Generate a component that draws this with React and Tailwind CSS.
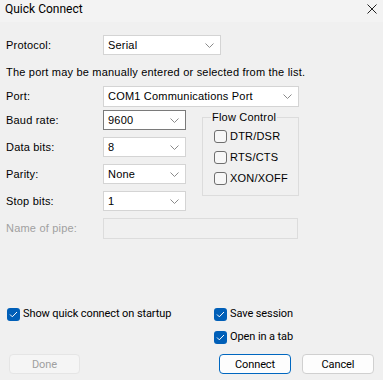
import React from "react";

const body = "font-['Liberation_Sans',Arial,sans-serif] text-[11px] tracking-[0.2px]";
const ui = "font-['Roboto','Noto_Sans',sans-serif] text-[11px] tracking-[-0.1px]";

function Chevron() {
  return (
    <svg width="9" height="5" viewBox="0 0 9 5" className="shrink-0">
      <path d="M0.5 0.5 L4.5 4.5 L8.5 0.5" fill="none" stroke="#8a8a8a" strokeWidth="1" />
    </svg>
  );
}

function Combo({ value, w, h = "h-[20px]", focused }) {
  return (
    <div className={`${w} ${h} flex items-center justify-between bg-white border ${focused ? "border-[#7a7a7a]" : "border-[#d4d4d4]"} pl-[4px] pr-[6px] text-black`}>
      <span>{value}</span>
      <Chevron />
    </div>
  );
}

function Check({ checked, label, className = "" }) {
  return (
    <div className={`flex items-center gap-[3px] ${className}`}>
      {checked ? (
        <div className="w-[13px] h-[13px] rounded-[3px] bg-[#005fb8] flex items-center justify-center shrink-0">
          <svg width="9" height="7" viewBox="0 0 9 7">
            <path d="M1 3.5 L3.3 5.8 L8 1" fill="none" stroke="#fff" strokeWidth="1" />
          </svg>
        </div>
      ) : (
        <div className="w-[13px] h-[13px] rounded-[3px] border border-[#6e6e6e] bg-[#f7f7f7] shrink-0" />
      )}
      <span className="text-black leading-[16px]">{label}</span>
    </div>
  );
}

function Row({ label, children, className = "", muted }) {
  return (
    <div className={`flex items-center ${className}`}>
      <span className={`w-[97px] ${muted ? "text-[#a0a0a0]" : "text-black"}`}>{label}</span>
      {children}
    </div>
  );
}

export default function App() {
  return (
    <div className={`w-[383px] h-[380px] bg-[#f0f0f0] flex flex-col ${body}`}>
      <div className="h-[22px] shrink-0 bg-[#f3f3f3] flex items-start justify-between pl-[5px] pr-[6px] pt-[1px] font-['Roboto','Noto_Sans',sans-serif] text-[12px] tracking-normal">
        <span className="text-black leading-[16px]">Quick Connect</span>
        <svg width="10" height="10" viewBox="0 0 10 10" className="mt-[3px]">
          <path d="M0.5 0.5 L9.5 9.5 M9.5 0.5 L0.5 9.5" stroke="#222" strokeWidth="1" />
        </svg>
      </div>

      <div className="flex flex-col pl-[6px] shrink-0">
        <Row label="Protocol:" className="mt-[13px]">
          <Combo value="Serial" w="w-[118px]" />
        </Row>
        <p className="mt-[10px] h-[14px] leading-[14px] text-black">The port may be manually entered or selected from the list.</p>
        <Row label="Port:" className="mt-[7px]">
          <Combo value="COM1 Communications Port" w="w-[196px]" h="h-[21px]" />
        </Row>

        <div className="flex mt-[3px]">
          <div className="flex flex-col gap-[7px]">
            <Row label="Baud rate:">
              <Combo value="9600" w="w-[83px]" focused />
            </Row>
            <Row label="Data bits:">
              <Combo value="8" w="w-[83px]" />
            </Row>
            <Row label="Parity:">
              <Combo value="None" w="w-[83px]" />
            </Row>
            <Row label="Stop bits:">
              <Combo value="1" w="w-[83px]" />
            </Row>
          </div>
          <fieldset className="ml-[16px] w-[97px] h-[86px] border border-[#dcdcdc]">
            <legend className="ml-[8px] px-[1px] text-black leading-[14px]">Flow Control</legend>
            <div className="flex flex-col pl-[11px]">
              <Check label="DTR/DSR" className="mt-[4px]" />
              <Check label="RTS/CTS" className="mt-[5px]" />
              <Check label="XON/XOFF" className="mt-[5px]" />
            </div>
          </fieldset>
        </div>

        <Row label="Name of pipe:" className="mt-[7px]" muted>
          <div className="w-[195px] h-[21px] border border-[#dcdcdc] bg-[#f0f0f0]" />
        </Row>
      </div>

      <div className={`flex flex-col mt-auto pb-[6px] ${ui}`}>
        <div className="flex">
          <div className="w-[214px] pl-[7px]">
            <Check checked label="Show quick connect on startup" />
          </div>
          <div className="flex flex-col gap-[7px]">
            <Check checked label="Save session" />
            <Check checked label="Open in a tab" />
          </div>
        </div>
        <div className="flex items-center mt-[9px] px-[9px]">
          <button className="w-[71px] h-[20px] rounded-[4px] border border-[#e5e5e5] bg-[#f5f5f5] text-[#a0a0a0] leading-none">Done</button>
          <button className="ml-auto w-[72px] h-[20px] rounded-[4px] border border-[#0067c0] bg-[#fdfdfd] text-black leading-none">Connect</button>
          <button className="ml-[11px] w-[72px] h-[20px] rounded-[4px] border border-[#d0d0d0] bg-[#fdfdfd] text-black leading-none">Cancel</button>
        </div>
      </div>
    </div>
  );
}
